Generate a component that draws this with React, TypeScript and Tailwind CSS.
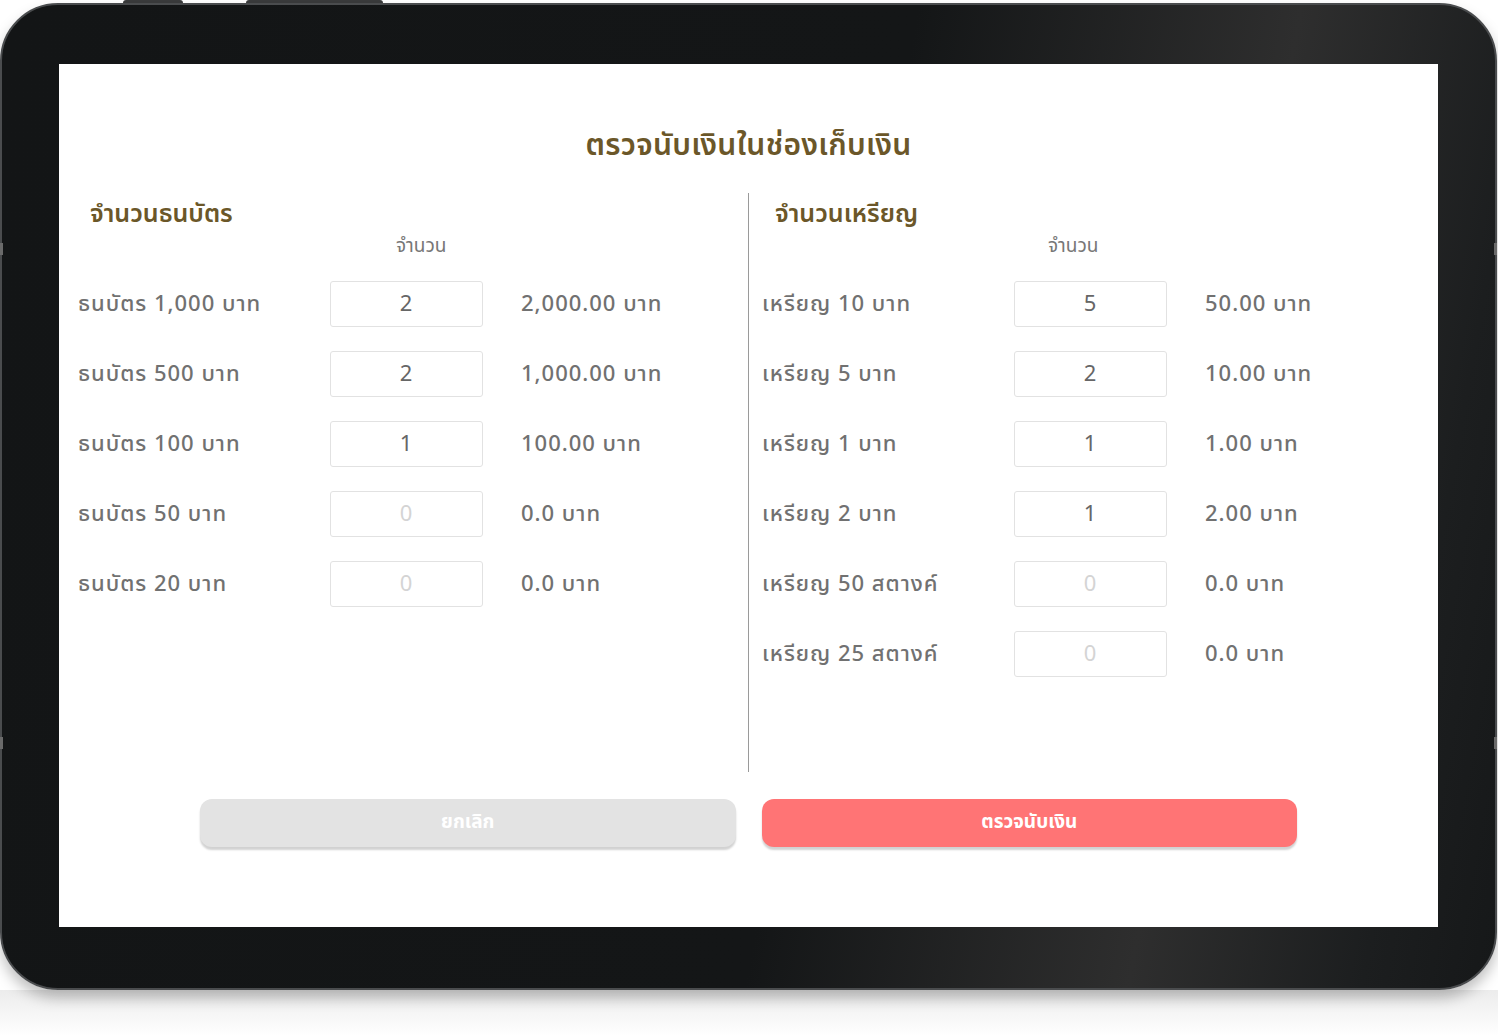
const notes = [
  { label: 'ธนบัตร 1,000 บาท', qty: '2', total: '2,000.00 บาท' },
  { label: 'ธนบัตร 500 บาท', qty: '2', total: '1,000.00 บาท' },
  { label: 'ธนบัตร 100 บาท', qty: '1', total: '100.00 บาท' },
  { label: 'ธนบัตร 50 บาท', qty: '', total: '0.0 บาท' },
  { label: 'ธนบัตร 20 บาท', qty: '', total: '0.0 บาท' },
]

const coins = [
  { label: 'เหรียญ 10 บาท', qty: '5', total: '50.00 บาท' },
  { label: 'เหรียญ 5 บาท', qty: '2', total: '10.00 บาท' },
  { label: 'เหรียญ 1 บาท', qty: '1', total: '1.00 บาท' },
  { label: 'เหรียญ 2 บาท', qty: '1', total: '2.00 บาท' },
  { label: 'เหรียญ 50 สตางค์', qty: '', total: '0.0 บาท' },
  { label: 'เหรียญ 25 สตางค์', qty: '', total: '0.0 บาท' },
]

interface Row {
  label: string
  qty: string
  total: string
}

const CountRow = ({ row }: { row: Row }) => (
  <div className="flex h-[70px] items-center text-[22px] font-medium tracking-[0.045em] text-[#717171]">
    <div className="w-[252px]">{row.label}</div>
    <div className="flex h-[46px] w-[153px] items-center justify-center rounded-[3px] border border-[#e2e2e2] bg-white text-[22px] font-normal">
      {row.qty ? (
        <span className="text-[#666666]">{row.qty}</span>
      ) : (
        <span className="text-[#d4d4d4]">0</span>
      )}
    </div>
    <div className="ml-[38px]">{row.total}</div>
  </div>
)

interface SectionProps {
  title: string
  rows: Row[]
  headingPad: string
  qtyPad: string
}

const Section = ({ title, rows, headingPad, qtyPad }: SectionProps) => (
  <div className="flex flex-col">
    <h2 className={`mt-[5px] h-8 text-[25px] leading-8 font-semibold text-[#6b5729] ${headingPad}`}>
      {title}
    </h2>
    <div className={`mt-[5px] h-6 text-[19px] leading-6 text-[#777777] ${qtyPad}`}>จำนวน</div>
    <div className="mt-[10px] flex flex-col">
      {rows.map((row) => (
        <CountRow key={row.label} row={row} />
      ))}
    </div>
  </div>
)

export default function App() {
  return (
    <div
      className="relative h-[1036px] w-[1498px] overflow-hidden bg-white [font-feature-settings:'zero']"
      style={{ fontFamily: '"Noto Sans Thai", "Noto Sans Thai Looped", Loma, "Noto Sans", sans-serif' }}
    >
      {/* top edge buttons */}
      <div className="flex h-[3px]">
        <div className="ml-[123px] w-[60px] rounded-t-sm bg-[#3a3b3c]" />
        <div className="ml-[63px] w-[137px] rounded-t-sm bg-[#3a3b3c]" />
      </div>

      {/* tablet body */}
      <div className="relative h-[987px] w-[1497px] rounded-[58px] border-[2px] border-[#4a4c4e] bg-[linear-gradient(100deg,#131516_0%,#141617_55%,#2e2e2e_78%,#1c1e1f_92%,#161819_100%)] px-[57px] pt-[59px] pb-[61px] shadow-[0_8px_14px_rgba(0,0,0,0.25)]">
        <div className="absolute top-[238px] left-[-2px] h-[12px] w-[3px] bg-[#6a6a6a]" />
        <div className="absolute top-[732px] left-[-2px] h-[12px] w-[3px] bg-[#6a6a6a]" />
        <div className="absolute top-[238px] right-[-2px] h-[12px] w-[3px] bg-[#6a6a6a]" />
        <div className="absolute top-[732px] right-[-2px] h-[12px] w-[3px] bg-[#6a6a6a]" />

        {/* screen */}
        <div className="flex h-[863px] w-[1379px] flex-col bg-white">
          <h1 className="mt-[62px] h-10 text-center text-[30px] leading-10 font-semibold tracking-[0.01em] text-[#6b5729]">
            ตรวจนับเงินในช่องเก็บเงิน
          </h1>

          <div className="mt-[27px] flex h-[579px]">
            <div className="w-[689px] pl-[19px]">
              <Section title="จำนวนธนบัตร" rows={notes} headingPad="pl-[12px]" qtyPad="pl-[318px]" />
            </div>
            <div className="w-px bg-[#9a9a9a]" />
            <div className="flex-1 pl-[13px]">
              <Section title="จำนวนเหรียญ" rows={coins} headingPad="pl-[13px]" qtyPad="pl-[286px]" />
            </div>
          </div>

          <div className="mx-auto mt-[27px] flex w-[1097px] gap-[26px]">
            <button className="h-[48px] flex-1 rounded-[12px] bg-[#e3e3e3] text-[19px] font-bold text-white shadow-[0_3px_2px_rgba(0,0,0,0.18)]">
              ยกเลิก
            </button>
            <button className="h-[48px] flex-1 rounded-[12px] bg-[#ff7475] text-[19px] font-bold text-white shadow-[0_3px_2px_rgba(0,0,0,0.18)]">
              ตรวจนับเงิน
            </button>
          </div>
        </div>
      </div>

      <div className="h-[46px] bg-[linear-gradient(to_bottom,#ececec,#ffffff)]" />
    </div>
  )
}
